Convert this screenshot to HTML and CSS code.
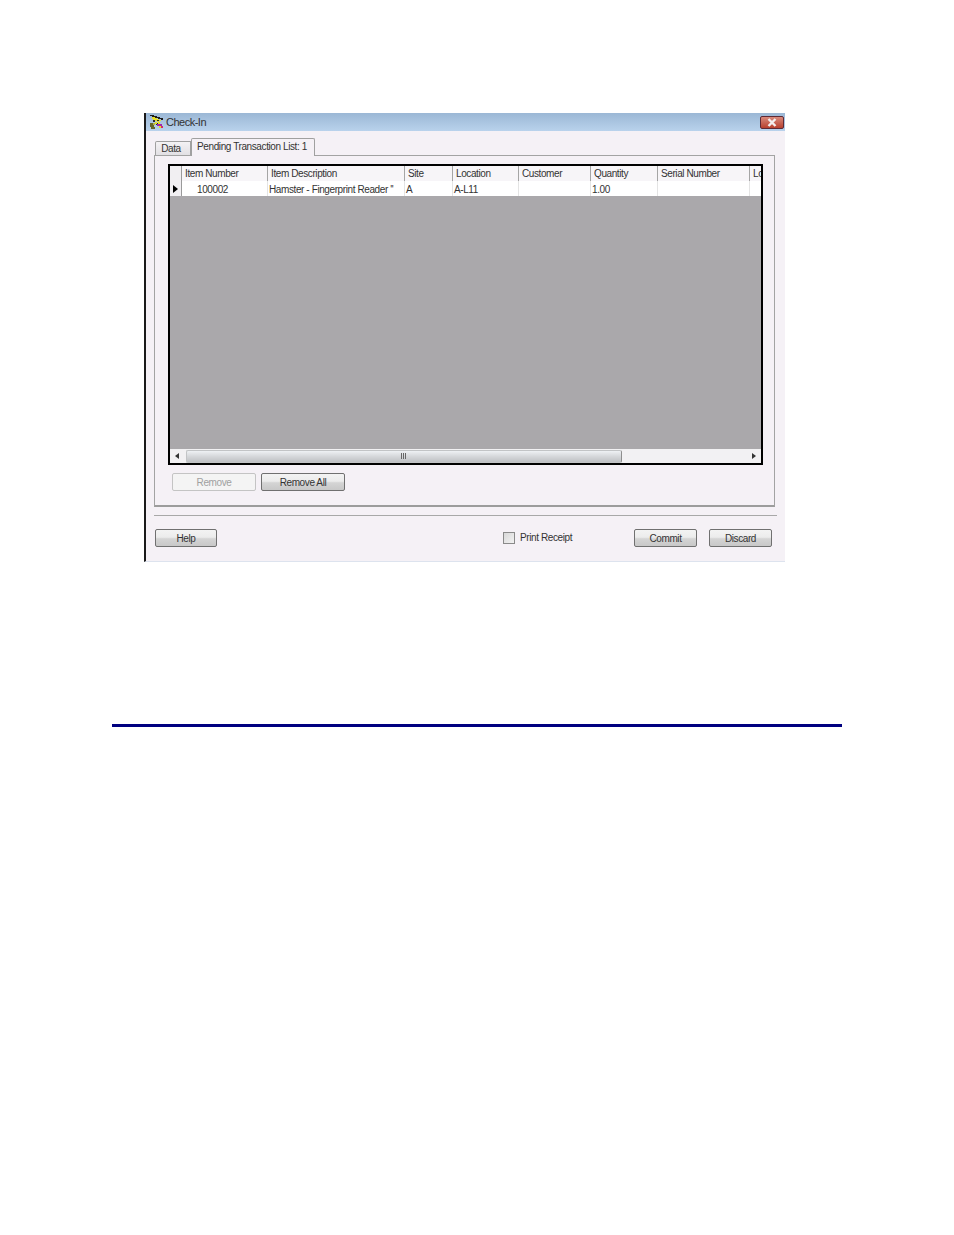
FILE: index.html
```html
<!DOCTYPE html>
<html lang="en">
<head>
    <meta charset="UTF-8">
    <title>Check-In</title>
    <link rel="stylesheet" href="styles.css">
</head>
<body>
    <div class="window">
        <div class="titlebar">
            <svg class="app-icon" width="16" height="16" viewBox="0 0 16 16" shape-rendering="crispEdges">
                <path d="M2 1h4v1h3v1h3v1h3v2h-2V5h-3V4H7V3H4V2H2z" fill="#1c1c1c"/>
                <path d="M4 3h3v1h2v1h2v1h2v1h-2v1H9V7H7V6H5V5H4z" fill="#e6de2a"/>
                <path d="M5 6h2v2H5zM9 6h2v1H9zM8 9h2v2H8z" fill="#2a2a2a"/>
                <path d="M7 8h2v2H7zM10 8h2v2h-2zM11 12h2v2h-2z" fill="#e6de2a"/>
                <path d="M9 10h3v2H9zM12 10h2v2h-2z" fill="#a226a8"/>
                <path d="M13 12h2v2h-2z" fill="#d02a70"/>
                <path d="M2 9h3v2h1v2h1v2H3v-2H2z" fill="#66662c"/>
                <path d="M5 9h2v2H5z" fill="#b9b440"/>
            </svg>
            <span class="title-text">Check-In</span>
            <div class="close-btn">
                <svg width="12" height="9" viewBox="0 0 12 9">
                    <path d="M2.5 1l7 7M9.5 1l-7 7" stroke="#f4eeee" stroke-width="2.4" fill="none"/>
                </svg>
            </div>
        </div>

        <div class="content">
            <div class="tabs">
                <div class="tab">Data</div>
                <div class="tab active">Pending Transaction List: 1</div>
            </div>

            <div class="panel">
                <div class="grid">
                    <div class="grid-head">
                        <div class="row-handle"></div>
                        <div class="col c-num">Item Number</div>
                        <div class="col c-desc">Item Description</div>
                        <div class="col c-site">Site</div>
                        <div class="col c-loc">Location</div>
                        <div class="col c-cust">Customer</div>
                        <div class="col c-qty">Quantity</div>
                        <div class="col c-serial">Serial Number</div>
                        <div class="col c-last">Lo</div>
                    </div>
                    <div class="grid-row">
                        <div class="row-handle"><span class="row-arrow"></span></div>
                        <div class="cell c-num indent">100002</div>
                        <div class="cell c-desc">Hamster - Fingerprint Reader ''</div>
                        <div class="cell c-site">A</div>
                        <div class="cell c-loc">A-L11</div>
                        <div class="cell c-cust"></div>
                        <div class="cell c-qty">1.00</div>
                        <div class="cell c-serial"></div>
                        <div class="cell c-last"></div>
                    </div>
                    <div class="grid-empty"></div>
                    <div class="hscroll">
                        <span class="arrow-left"></span>
                        <div class="thumb"><span class="grip"></span></div>
                        <span class="arrow-right"></span>
                    </div>
                </div>

                <div class="panel-buttons">
                    <div class="btn wide disabled">Remove</div>
                    <div class="btn wide">Remove All</div>
                </div>
            </div>

            <div class="separator"></div>

            <div class="footer">
                <div class="btn help">Help</div>
                <div class="receipt">
                    <span class="checkbox"></span>
                    <span>Print Receipt</span>
                </div>
                <div class="btn narrow commit">Commit</div>
                <div class="btn narrow">Discard</div>
            </div>
        </div>
    </div>

    <div class="rule"></div>
</body>
</html>
```

FILE: styles.css
```css
body {
    margin: 0;
    background: #fff;
    font-family: "Liberation Sans", Arial, sans-serif;
    font-size: 10px;
    letter-spacing: -0.4px;
    color: #333;
    padding: 113px 0 0 144px;
    height: 1122px;
    overflow: hidden;
}

.window {
    width: 639px;
    height: 448px;
    background: #f5f1f6;
    border-left: 2px solid #1a1a1a;
    border-bottom: 1px solid #dde3ee;
    display: flex;
    flex-direction: column;
}

.titlebar {
    height: 18px;
    background: linear-gradient(#9bb7d5, #b9d2ec);
    display: flex;
    align-items: center;
    padding: 0 1px 0 2px;
    flex-shrink: 0;
}

.app-icon {
    margin-right: 2px;
}

.title-text {
    font-size: 11px;
    flex: 1;
    letter-spacing: -0.5px;
}

.close-btn {
    width: 22px;
    height: 11px;
    background: linear-gradient(#d98a7c, #b8402e);
    border: 1px solid #5e2a35;
    border-radius: 2px;
    display: flex;
    align-items: center;
    justify-content: center;
}

.content {
    padding: 7px 9px 0 8px;
}

/* Tabs */
.tabs {
    display: flex;
    align-items: flex-end;
    height: 17px;
    padding-left: 1px;
    position: relative;
    z-index: 1;
}

.tab {
    height: 13px;
    width: 30px;
    padding-right: 4px;
    border: 1px solid #a0a0a0;
    border-bottom: none;
    background: linear-gradient(#f4f2f4, #e2e0e4);
    text-align: center;
    line-height: 14px;
    white-space: nowrap;
    border-radius: 2px 0 0 0;
}

.tab.active {
    height: 17px;
    width: 120px;
    padding-right: 2px;
    background: #f5f1f6;
    margin-bottom: -1px;
    line-height: 15px;
    border-radius: 2px 2px 0 0;
}

.panel {
    height: 341px;
    width: 606px;
    border: 1px solid #a3a3a3;
    border-bottom: 2px solid #9c9c9c;
    padding: 8px 0 0 13px;
}

/* Data grid */
.grid {
    width: 591px;
    height: 297px;
    border: 2px solid #000;
    display: flex;
    flex-direction: column;
    overflow: hidden;
}

.grid-head, .grid-row {
    display: flex;
    flex-shrink: 0;
    white-space: nowrap;
    height: 15px;
    line-height: 15px;
}

.grid-head {
    background: #f7f5f8;
}

.grid-row {
    background: #fff;
    line-height: 17px;
}

.row-handle {
    width: 11px;
    flex-shrink: 0;
    background: #f1eff2;
    border-right: 1px solid #9a9a9a;
    display: flex;
    align-items: center;
    justify-content: center;
}

.row-arrow {
    border-left: 5px solid #000;
    border-top: 4px solid transparent;
    border-bottom: 4px solid transparent;
}

.col, .cell {
    flex-shrink: 0;
    box-sizing: border-box;
    overflow: hidden;
    padding-left: 1px;
}

.col {
    border-right: 1px solid #a5a5a5;
    padding-left: 3px;
}

.cell {
    border-right: 1px solid #e4e4e4;
}

.c-num { width: 86px; }
.c-desc { width: 137px; }
.c-site { width: 48px; }
.c-loc { width: 66px; }
.c-cust { width: 72px; }
.c-qty { width: 67px; }
.c-serial { width: 92px; }
.c-last { width: 14px; border-right: none; }

.cell.indent {
    padding-left: 15px;
}

.grid-empty {
    flex: 1;
    background: #aaa8ab;
}

.hscroll {
    height: 14px;
    flex-shrink: 0;
    background: #f2f1f3;
    display: flex;
    align-items: center;
}

.arrow-left, .arrow-right {
    width: 0;
    height: 0;
    border-top: 3px solid transparent;
    border-bottom: 3px solid transparent;
}

.arrow-left {
    border-right: 4px solid #333;
    margin: 0 7px 0 5px;
}

.arrow-right {
    border-left: 4px solid #333;
    margin: 0 5px 0 auto;
}

.thumb {
    width: 436px;
    height: 13px;
    box-sizing: border-box;
    background: linear-gradient(#eef1f4, #d5d7da 50%, #bfc1c4);
    border: 1px solid #c2c4c6;
    border-right-color: #8e8e8e;
    border-radius: 2px;
    display: flex;
    align-items: center;
    justify-content: center;
}

.grip {
    width: 6px;
    height: 6px;
    background: repeating-linear-gradient(90deg, #666 0 1px, transparent 1px 2px);
}

/* Buttons */
.btn {
    height: 16px;
    line-height: 18px;
    text-align: center;
    border: 1px solid #707070;
    border-radius: 2px;
    background: linear-gradient(#f3f3f3, #ececec 45%, #d4d4d4 55%, #c8c8c8);
}

.btn.wide {
    width: 82px;
}

.btn.help {
    width: 60px;
}

.btn.narrow {
    width: 61px;
}

.btn.disabled {
    border-color: #c4c4c4;
    background: #f4f4f4;
    color: #a0a0a0;
}

.panel-buttons {
    display: flex;
    gap: 5px;
    padding: 8px 0 0 4px;
}

.separator {
    width: 623px;
    height: 1px;
    background: #a8a8a8;
    margin-top: 8px;
}

.footer {
    display: flex;
    align-items: center;
    padding: 13px 0 0 1px;
}

.receipt {
    display: flex;
    align-items: center;
    gap: 5px;
    margin-left: 286px;
    width: 131px;
    margin-top: -1px;
}

.checkbox {
    width: 10px;
    height: 10px;
    border: 1px solid #8a8a8a;
    background: linear-gradient(135deg, #d8d8d8, #f2f2f2);
}

.commit {
    margin-right: 12px;
}

/* Divider below the screenshot */
.rule {
    width: 730px;
    height: 3px;
    background: #000080;
    margin: 162px 0 0 -32px;
}
```
